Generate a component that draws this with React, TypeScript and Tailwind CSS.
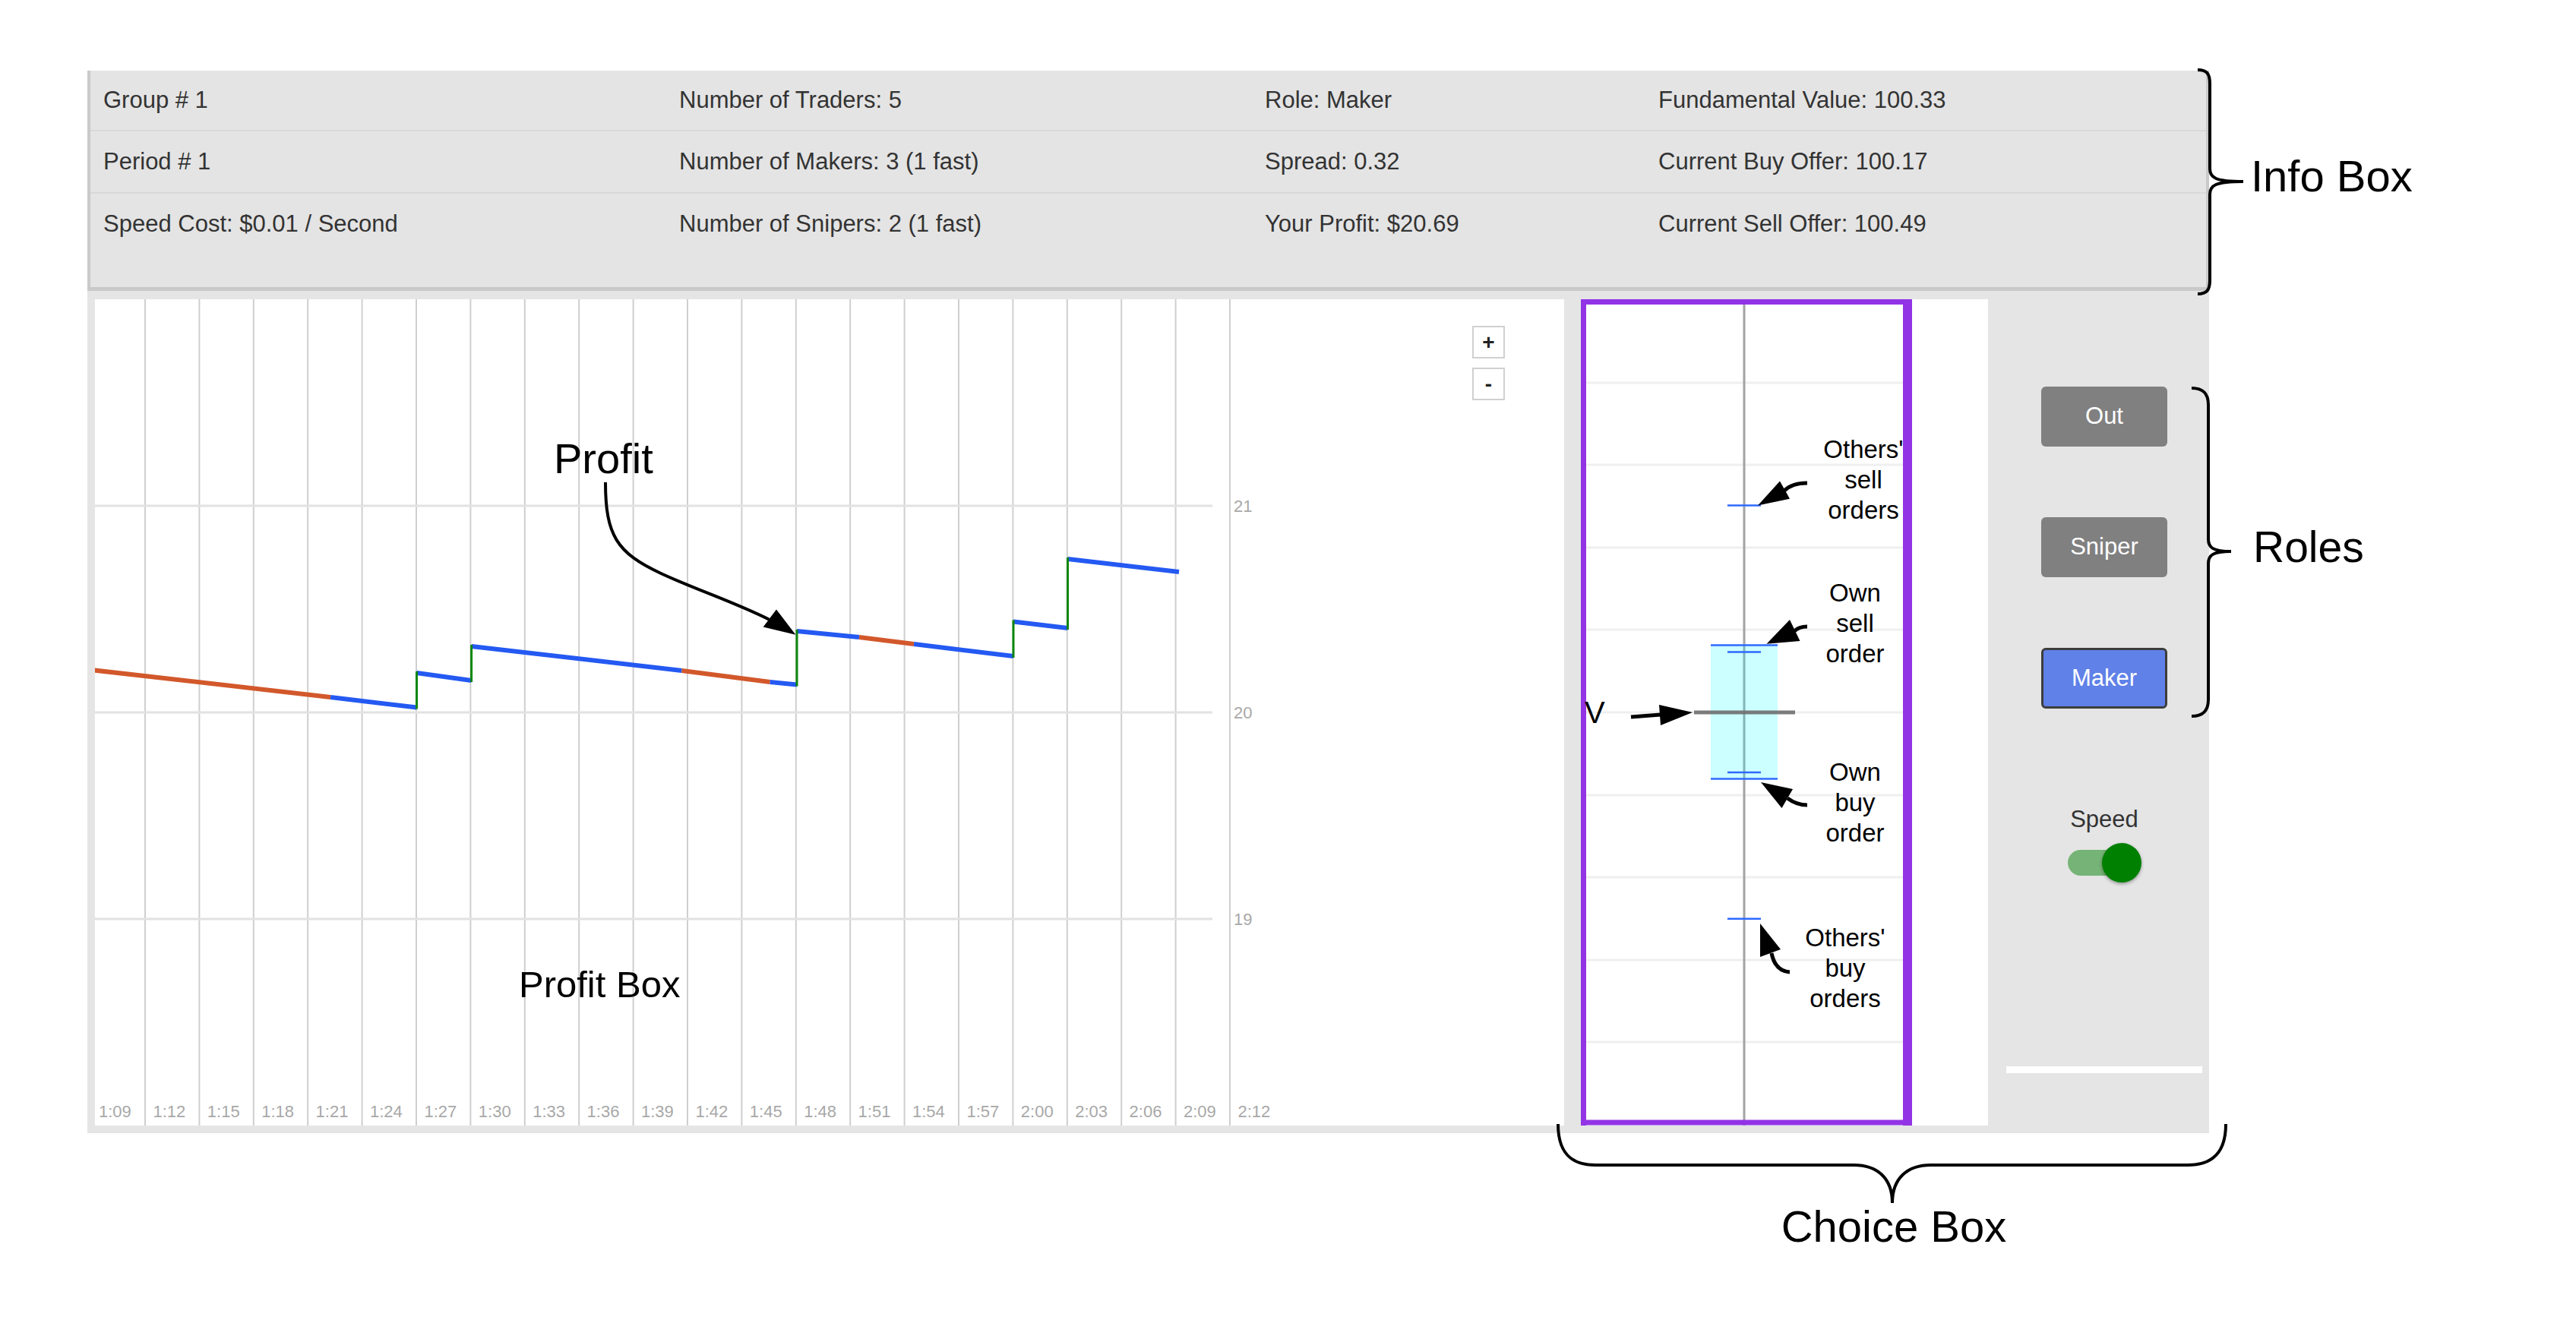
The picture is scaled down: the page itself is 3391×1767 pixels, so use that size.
import React from "react";

const infoRows: string[][] = [
  ["Group # 1", "Number of Traders: 5", "Role: Maker", "Fundamental Value: 100.33"],
  ["Period # 1", "Number of Makers: 3 (1 fast)", "Spread: 0.32", "Current Buy Offer: 100.17"],
  ["Speed Cost: $0.01 / Second", "Number of Snipers: 2 (1 fast)", "Your Profit: $20.69", "Current Sell Offer: 100.49"],
];

const ORANGE = "#d2582b";
const BLUE = "#2459f2";
const GREEN = "#0c870c";

type Seg = [number, number, number, number, string];
const flat: Seg[] = [
  [-1, 488.5, 310, 524, ORANGE],
  [310, 524, 423.5, 537.5, BLUE],
  [423.5, 492, 495.6, 502, BLUE],
  [495.6, 457, 772.5, 489, BLUE],
  [772.5, 489, 888.6, 504, ORANGE],
  [888.6, 504, 924, 507.6, BLUE],
  [924, 437, 1006, 445, BLUE],
  [1006, 445, 1078, 454, ORANGE],
  [1078, 454, 1209, 470, BLUE],
  [1209, 424.5, 1280.5, 433, BLUE],
  [1280.5, 342, 1427, 359, BLUE],
];
const jumps: [number, number, number][] = [
  [423.5, 537.5, 492],
  [495.6, 502, 457],
  [924, 507.6, 437],
  [1209, 470, 424.5],
  [1280.5, 433, 342],
];

const times = Array.from({ length: 22 }, (_, i) => {
  const s = 69 + 3 * i;
  return `${Math.floor(s / 60)}:${String(s % 60).padStart(2, "0")}`;
});

function ProfitChart() {
  return (
    <div className="relative w-[1934px] h-[1088px] bg-white shrink-0">
      <svg width={1934} height={1088} className="block">
        {times.map((_, k) =>
          k === 0 ? null : (
            <line key={"v" + k} x1={-5.4 + 71.4 * k} y1={0} x2={-5.4 + 71.4 * k} y2={1088} stroke="#cfcfcf" strokeWidth={2} />
          )
        )}
        {[272, 544, 816].map((y) => (
          <line key={"h" + y} x1={0} y1={y} x2={1471} y2={y} stroke="#e2e2e2" strokeWidth={3} />
        ))}
        {[
          ["21", 272],
          ["20", 544],
          ["19", 816],
        ].map(([t, y]) => (
          <text key={t as string} x={1499} y={(y as number) + 8} fontSize={22} fill="#a8a8a8" fontFamily="Liberation Sans, Arial, sans-serif">
            {t}
          </text>
        ))}
        {times.map((t, k) => (
          <text key={t} x={5 + 71.4 * k} y={1077} fontSize={22} fill="#a8a8a8" fontFamily="Liberation Sans, Arial, sans-serif">
            {t}
          </text>
        ))}
        {flat.map(([x1, y1, x2, y2, c], i) => (
          <line key={"s" + i} x1={x1} y1={y1} x2={x2} y2={y2} stroke={c} strokeWidth={6} />
        ))}
        {jumps.map(([x, y1, y2], i) => (
          <line key={"j" + i} x1={x} y1={y1 + 2} x2={x} y2={y2 - 2} stroke={GREEN} strokeWidth={3} />
        ))}
      </svg>
      <div className="absolute left-[1813px] top-[35px] flex flex-col gap-[12px]">
        <div className="w-[43px] h-[43px] border-2 border-[#d0d0d0] bg-white flex items-center justify-center text-[28px] font-bold text-[#222] leading-none">
          +
        </div>
        <div className="w-[43px] h-[43px] border-2 border-[#d0d0d0] bg-white flex items-center justify-center text-[28px] font-bold text-[#222] leading-none">
          -
        </div>
      </div>
    </div>
  );
}

function ChoiceChart() {
  const OB = "#2f69ff";
  return (
    <div className="w-[536px] h-[1088px] bg-white shrink-0">
      <svg width={536} height={1088} className="block">
        {[110, 218, 327, 435, 544, 653, 761, 870, 978].map((y) => (
          <line key={y} x1={0} y1={y} x2={430} y2={y} stroke="#efefef" strokeWidth={3} />
        ))}
        <line x1={215} y1={0} x2={215} y2={1088} stroke="#a3a3a3" strokeWidth={3} />
        <rect x={171} y={455.5} width={88} height={176} fill="#00ffff" opacity={0.2} />
        <line x1={149} y1={544} x2={282} y2={544} stroke="#6f6f6f" strokeWidth={5} opacity={0.9} />
        <line x1={193} y1={271.6} x2={237} y2={271.6} stroke={OB} strokeWidth={2.5} />
        <line x1={171} y1={455.5} x2={259} y2={455.5} stroke={OB} strokeWidth={2.5} />
        <line x1={193} y1={464.4} x2={237} y2={464.4} stroke={OB} strokeWidth={2.5} />
        <line x1={193} y1={623} x2={237} y2={623} stroke={OB} strokeWidth={2.5} />
        <line x1={171} y1={631.5} x2={259} y2={631.5} stroke={OB} strokeWidth={2.5} />
        <line x1={193} y1={815.7} x2={237} y2={815.7} stroke={OB} strokeWidth={2.5} />
      </svg>
    </div>
  );
}

function RolePanel() {
  return (
    <div className="w-[291px] shrink-0 flex flex-col items-center pl-[15px] pt-[115px]">
      <div className="flex flex-col gap-[93px]">
        <div className="w-[166px] h-[79px] rounded-[6px] bg-[#808080] text-white text-[31px] flex items-center justify-center">Out</div>
        <div className="w-[166px] h-[79px] rounded-[6px] bg-[#808080] text-white text-[31px] flex items-center justify-center">Sniper</div>
        <div className="w-[166px] h-[80px] rounded-[6px] bg-[#5f81e8] border-[3px] border-[#3d3d3d] text-white text-[31px] flex items-center justify-center">Maker</div>
      </div>
      <div className="mt-[128px] h-[36px] leading-[36px] text-[31px] text-[#333]">Speed</div>
      <div className="mt-[13px] relative w-[97px] h-[52px]">
        <div className="absolute left-0 top-[9px] w-[87px] h-[34px] rounded-full bg-[#76b376]" />
        <div className="absolute right-0 top-0 w-[52px] h-[52px] rounded-full bg-[#008000] shadow-[0_2px_4px_rgba(0,0,0,0.35)]" />
      </div>
      <div className="mt-[242px] w-[258px] h-[9px] bg-white" />
    </div>
  );
}

function Overlay() {
  return (
    <svg width={3391} height={1767} className="absolute left-0 top-0 pointer-events-none">
      <rect x={2081} y={394} width={7} height={1088} fill="#9234e5" />
      <rect x={2081} y={394} width={436} height={7} fill="#9234e5" />
      <rect x={2081} y={1474.5} width={436} height={7} fill="#9234e5" />
      <rect x={2505} y={394} width={12} height={1088} fill="#9234e5" />
      <g fill="none" stroke="#000" strokeWidth={4}>
        <path d="M2893,92 C2905,92 2909,97 2909,110 L2909,222 C2909,234 2916,239 2953,239 C2916,239 2909,244 2909,256 L2909,369 C2909,382 2905,387 2893,387" />
        <path d="M2885,511 C2900,511 2907,518 2907,533 L2907,710 C2907,721 2913,726 2937,726 C2913,726 2907,731 2907,742 L2907,921 C2907,936 2900,943 2885,943" />
        <path d="M2051,1480 C2051,1518 2068,1534 2100,1534 L2440,1534 C2472,1534 2491,1552 2491,1584 C2491,1552 2510,1534 2542,1534 L2880,1534 C2912,1534 2930,1518 2930,1480" />
        <path d="M797,635 C797,705 812,728 870,755 C920,778 965,792 1013,816" />
      </g>
      <polygon points="1047.4,835.8 1022,802.4 1004.7,825.4" fill="#000" />
      <g fill="none" stroke="#000" strokeWidth={5}>
        <path d="M2379,636 C2366,636 2356,639 2349,646" />
        <path d="M2379,825 C2372,825 2366,827 2362,831" />
        <path d="M2147,944 L2186,941" />
        <path d="M2379,1060 C2369,1060 2361,1057 2353,1051" />
        <path d="M2356,1280 C2343,1279 2335,1270 2332,1255" />
      </g>
      <g fill="#000">
        <polygon points="2314,665.6 2343,633.5 2356,656.7" />
        <polygon points="2325.5,847.7 2356,816 2369.5,844" />
        <polygon points="2228,938 2184,928 2186,955" />
        <polygon points="2318,1030 2360,1039 2345.5,1064" />
        <polygon points="2317,1216 2317,1260 2344,1250" />
      </g>
    </svg>
  );
}

function Label({ className, children }: { className: string; children: React.ReactNode }) {
  return <div className={"absolute text-black whitespace-pre " + className}>{children}</div>;
}

export default function App() {
  return (
    <div className="relative w-[3391px] h-[1767px] bg-white overflow-hidden font-['Liberation_Sans',Arial,sans-serif]">
      <div className="pt-[93px] pl-[115px]">
        <div className="w-[2793px] h-[290px] bg-[#e4e4e4] border-l-4 border-r-4 border-b-[5px] border-[#c9c9c9] rounded-br-[6px] text-[31px] text-[#333]">
          {infoRows.map((r, i) => (
            <div
              key={i}
              className={
                "grid grid-cols-[758px_771px_518px_1fr] pl-[17px] items-center " +
                (i === 0 ? "h-[80px] border-b-2 border-[#d9d9d9]" : i === 1 ? "h-[82px] border-b-2 border-[#d9d9d9]" : "h-[80px]")
              }
            >
              {r.map((c) => (
                <div key={c}>{c}</div>
              ))}
            </div>
          ))}
        </div>
        <div className="w-[2793px] h-[1109px] bg-[#e5e5e5] flex pt-[11px] pb-[10px] pl-[10px] gap-[22px]">
          <ProfitChart />
          <div className="flex">
            <ChoiceChart />
            <RolePanel />
          </div>
        </div>
      </div>
      <Overlay />
      <Label className="left-[729px] top-[576px] text-[56px] leading-none">Profit</Label>
      <Label className="left-[683px] top-[1272px] text-[49px] leading-none">Profit Box</Label>
      <Label className="left-[2963px] top-[203px] text-[58px] leading-none">Info Box</Label>
      <Label className="left-[2966px] top-[692px] text-[57px] leading-none">Roles</Label>
      <Label className="left-[2293px] top-[1586px] w-[400px] text-center text-[58px] leading-none">Choice Box</Label>
      <Label className="left-[2086px] top-[918px] text-[40px] leading-none">V</Label>
      <Label className="left-[2353px] top-[572px] w-[200px] text-center text-[33px] leading-[40px]">{"Others'\nsell\norders"}</Label>
      <Label className="left-[2342px] top-[761px] w-[200px] text-center text-[33px] leading-[40px]">{"Own\nsell\norder"}</Label>
      <Label className="left-[2342px] top-[997px] w-[200px] text-center text-[33px] leading-[40px]">{"Own\nbuy\norder"}</Label>
      <Label className="left-[2329px] top-[1215px] w-[200px] text-center text-[33px] leading-[40px]">{"Others'\nbuy\norders"}</Label>
    </div>
  );
}
